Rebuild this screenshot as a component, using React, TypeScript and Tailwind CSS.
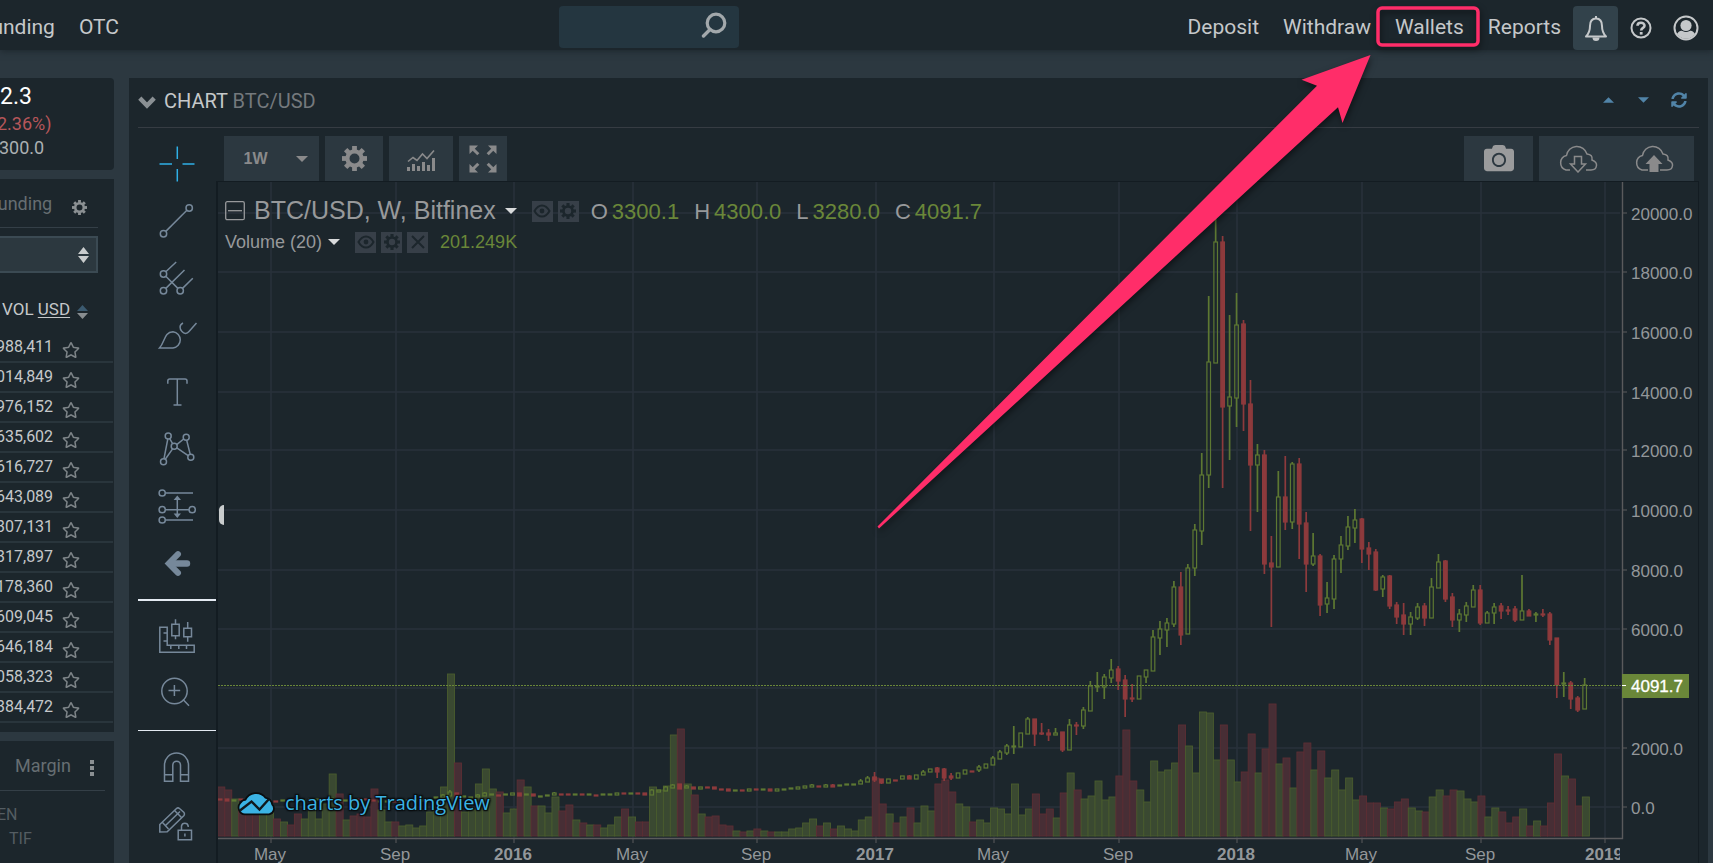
import type { ReactNode } from "react";
import { FaCamera, FaRegStar, FaSyncAlt } from "react-icons/fa";

// Weekly volume, bar height in px. Negative means the week closed lower.
const VOLUMES = [
  -49, -46, 37, -29, -24, -24, 27, 27, -17, 14, -11, -22, 17, 26, 17, 32, 62, -42, 16, -20,
  -22, -19, -47, 26, 14, -14, 10, 11, 8, 10, 24, 26, 49, 162, -73, 24, 26, 52, 67, 47,
  -44, 23, 27, -56, 49, -30, 30, 23, 39, -25, -31, 16, -13, 11, -11, 8, 11, 19, -27, 19,
  -14, -14, 49, 46, 50, 101, -107, 52, -41, 22, -19, -20, -11, -10, 5, -4, 5, -7, 5, -4,
  4, 4, 7, 8, 13, 17, -10, 13, -7, 10, 7, 5, 16, 19, -58, -32, 22, -13, 19, -28,
  13, 30, 25, -52, -56, -44, 32, 29, -14, 16, 13, 28, 27, 22, 52, 21, 27, -42, -22, -27,
  18, -43, 63, -46, 37, 40, 55, 36, 39, -60, -106, -55, 46, 34, 75, 64, 66, 73, -111, 90,
  63, 124, 123, 76, -111, 76, 54, -64, -102, 63, -87, -132, 72, -78, 48, -84, -93, 66, -85, 58,
  66, 46, 58, 36, -40, -33, -33, 28, -27, -34, -37, 28, 25, -24, 39, 46, -40, -46, 45, 37,
  34, -40, 19, 28, -24, -13, -19, 27, -10, 15, -10, -33, -82, 60, -57, -30, 39,
];

// high, body top, body bottom, low. Missing values collapse to a flat candle.
const CANDLES: number[][] = [
  [799], [799, 799, 801], [800], [799], [800], [801], [801], [801], [801], [800],
  [800], [799], [800], [799], [799], [799], [798], [799], [800], [799],
  [799], [799], [800], [801], [801], [801], [801], [800], [800], [800],
  [799], [797], [794, 795, 798], [790, 792, 796, 799], [793, 793, 797], [796], [797], [794, 795, 797], [792, 793, 796], [794],
  [795], [794], [793, 793, 795], [793, 793, 796], [794], [794, 794, 796], [796], [795], [792, 793, 795], [794],
  [794], [794], [794], [794], [795], [794], [794], [793, 793, 795], [793], [793],
  [793], [793, 793, 795], [789, 790, 795], [790, 790, 792], [786, 787, 791], [784, 785, 788], [784, 784, 789], [785, 786, 788], [787, 787, 789], [787, 787, 789],
  [787], [787, 787, 789], [789], [789, 789, 791], [790], [790], [789, 789, 791], [789], [789], [789, 789, 791],
  [789, 789, 791], [789], [788], [787, 787, 789], [786, 786, 788], [784, 785, 787], [786], [784, 785, 787], [784, 785, 787], [785],
  [784], [784], [779, 781, 784], [776, 778, 782], [772, 777, 780, 782], [779, 779, 783, 784], [779, 779, 783], [780], [776, 776, 779], [775, 776, 779],
  [775, 775, 779], [770, 772, 775], [769, 769, 772], [767, 768, 772, 778], [768, 769, 778, 781], [773, 776, 778, 780], [773, 773, 778], [770, 770, 774], [771], [765, 767, 770, 772],
  [764, 764, 768], [756, 758, 765], [750, 752, 759], [744, 746, 753, 755], [726, 746, 747, 754], [733, 733, 747], [717, 719, 734], [719, 719, 734, 746], [723, 733, 734, 735], [729, 733, 735, 741],
  [728, 733, 735], [732, 732, 750, 752], [719, 725, 750], [722, 725, 726, 735], [707, 710, 726, 729], [681, 686, 711], [672, 686, 687, 692], [674, 677, 687, 699], [659, 670, 678, 683], [666, 669, 681, 690],
  [675, 680, 699, 717], [684, 698, 699, 702], [676, 676, 699], [670, 670, 677, 683], [630, 637, 671], [621, 629, 638, 655], [618, 623, 630, 647], [581, 587, 624, 627], [572, 587, 635, 645], [564, 568, 634],
  [524, 530, 568, 576], [453, 475, 531, 545], [296, 362, 475, 488], [212, 242, 363], [236, 242, 407, 488], [315, 397, 406, 460], [293, 325, 398, 427], [320, 324, 404, 431], [380, 404, 465, 531], [444, 455, 465, 512],
  [450, 455, 564, 574], [536, 563, 567, 627], [471, 497, 567], [456, 497, 522, 530], [462, 464, 522, 529], [458, 464, 524, 559], [512, 523, 564, 592], [533, 556, 564, 566], [554, 556, 605, 616], [582, 598, 604, 613],
  [555, 559, 599, 609], [536, 545, 559, 573], [516, 527, 546, 550], [509, 520, 528, 543], [518, 519, 549, 563], [542, 548, 554, 570], [549, 552, 590, 591], [575, 577, 589, 597], [575, 576, 606, 609], [602, 605, 617, 624],
  [603, 615, 624, 635], [612, 617, 624, 635], [603, 607, 618, 620], [603, 606, 618, 626], [578, 587, 618], [554, 562, 588], [560, 561, 599, 602], [593, 597, 620, 627], [609, 614, 620, 632], [602, 606, 615, 622],
  [585, 590, 607], [585, 590, 623, 625], [611, 613, 623], [603, 607, 613, 624], [603, 606, 611, 619], [606, 610, 611, 615], [606, 609, 620, 622], [575, 611, 620], [609, 611, 616], [612, 614, 615, 622],
  [609, 614, 615, 617], [612, 614, 640, 645], [638, 638, 685, 698], [672, 683, 684, 697], [681, 683, 699, 709], [696, 698, 710, 712], [678, 685, 709],
];

const PRICES = [
  { label: "20000.0", y: 213 },
  { label: "18000.0", y: 272 },
  { label: "16000.0", y: 332 },
  { label: "14000.0", y: 392 },
  { label: "12000.0", y: 450 },
  { label: "10000.0", y: 510 },
  { label: "8000.0", y: 570 },
  { label: "6000.0", y: 629 },
  { label: "", y: 688 },
  { label: "2000.0", y: 748 },
  { label: "0.0", y: 807 },
];

const DATES = [
  { label: "May", x: 271 },
  { label: "Sep", x: 396 },
  { label: "2016", x: 514 },
  { label: "May", x: 633 },
  { label: "Sep", x: 757 },
  { label: "2017", x: 876 },
  { label: "May", x: 994 },
  { label: "Sep", x: 1119 },
  { label: "2018", x: 1237 },
  { label: "May", x: 1362 },
  { label: "Sep", x: 1481 },
  { label: "2019", x: 1605 },
];

const TICKERS = [
  "988,411",
  "014,849",
  "976,152",
  "635,602",
  "616,727",
  "643,089",
  "307,131",
  "317,897",
  "178,360",
  "609,045",
  "646,184",
  "058,323",
  "384,472",
];

function Gear({ className }: { className: string }) {
  return (
    <svg viewBox="0 0 24 24" className={className} fill="none" stroke="currentColor">
      <circle cx="12" cy="12" r="6.8" strokeWidth="4" />
      {[0, 45, 90, 135, 180, 225, 270, 315].map((a) => (
        <path key={a} d="M12 4.5V0" strokeWidth="4.6" transform={`rotate(${a} 12 12)`} />
      ))}
    </svg>
  );
}

function Caret({ className }: { className: string }) {
  return (
    <svg viewBox="0 0 12 6" className={className} fill="currentColor">
      <path d="M0 0h12L6 6z" />
    </svg>
  );
}

function Eye() {
  return (
    <svg viewBox="0 0 18 18" className="w-[18px] h-[18px]" fill="none" stroke="currentColor">
      <path d="M1.5 9C4 4.500 6.500 3.500 9 3.500S14 4.500 16.500 9C14 13.500 11.500 14.500 9 14.500S4 13.500 1.500 9z" strokeWidth="2" />
      <circle cx="9" cy="9" r="2.4" fill="currentColor" stroke="none" />
    </svg>
  );
}

function LegendButton({ label, children }: { label: string; children: ReactNode }) {
  return (
    <button
      aria-label={label}
      className="w-[21px] h-[21px] bg-[#373f48] text-[#1c262c] flex items-center justify-center"
    >
      {children}
    </button>
  );
}

function Tool({ label, children, active }: { label: string; children: ReactNode; active?: boolean }) {
  return (
    <button
      aria-label={label}
      className={`h-[57px] pb-[2px] w-full flex items-center justify-center ${active ? "text-[#2fb0e6]" : "text-[#76889a]"}`}
    >
      <svg viewBox="0 0 36 36" className="w-9 h-9 overflow-visible" fill="none" stroke="currentColor" strokeWidth="1.5">
        {children}
      </svg>
    </button>
  );
}

function DrawingTools() {
  return (
    <div className="w-[87px] pl-[9px] shrink-0">
      <Tool label="Cross" active>
        <path d="M.5 18H13M23.500 18H35.500M18.300 .5V13M18.300 23V35.500" />
      </Tool>
      <Tool label="Trend line">
        <circle cx="30.2" cy="5" r="3.2" />
        <circle cx="4.5" cy="30.7" r="3.2" />
        <path d="M27.900 7.300 6.800 28.400" />
      </Tool>
      <Tool label="Pitchfork">
        <circle cx="4.5" cy="14" r="3.2" />
        <circle cx="4.5" cy="30.7" r="3.2" />
        <circle cx="21.2" cy="30.7" r="3.2" />
        <path d="M6.800 11.700 17.200 2M6.800 28.400 25.500 10M23.500 28.400 33.800 18.300M6.800 16.300 18.900 28.400" />
      </Tool>
      <Tool label="Brush">
        <path d="M.5 31C6 25 5 15 14 14.700A8.200 8.200 0 0 1 14 31z" />
        <path d="M24 6C20 8 20.500 12 23 14.500C25 17 28 17 30 14.500L37.500 6" />
      </Tool>
      <Tool label="Text">
        <path d="M8.800 9.700V7Q8.800 5 10.800 5H26Q28 5 28 7V9.700M18.300 5V31M14.500 31H22.500" />
      </Tool>
      <Tool label="Patterns">
        <circle cx="9.200" cy="5" r="3" />
        <circle cx="27.200" cy="6.300" r="3" />
        <circle cx="15.200" cy="15.300" r="3" />
        <circle cx="31.800" cy="26.300" r="3" />
        <circle cx="4.500" cy="30.700" r="3" />
        <path d="M5 27.700 8.800 8M10.700 7.600 13.600 12.700M17.700 13.700 24.700 8M27.700 9.300 31.200 23.300M29.200 24.700 17.800 16.900M13.600 17.900 6.300 28.300" />
      </Tool>
      <Tool label="Prediction">
        <circle cx="3.200" cy="5" r="3.100" />
        <circle cx="3.200" cy="21.700" r="3.100" />
        <circle cx="33.200" cy="21.700" r="3.100" />
        <circle cx="3.200" cy="32" r="3.100" />
        <path d="M6.300 5H34M6.300 21.700H30M6.300 32H34M18.300 9V28" />
        <path d="M18.300 7.500 22 12H14.600zM18.300 30 22 25.500H14.600z" fill="currentColor" stroke="none" />
      </Tool>
      <Tool label="Hide tools">
        <path d="M19 9.200 9.800 18.500 19 27.800" strokeWidth="6" strokeLinecap="round" />
        <path d="M11 18.500H28" strokeWidth="6.400" strokeLinecap="round" />
      </Tool>
      <div className="h-[2px] bg-[#e4eaf2] my-[7px]" />
      <Tool label="Measure">
        <path d="M.8 9.300H8.200V27.300H35.200V34.300H.8zM4.500 15H8.200M4.500 23H8.200M11.800 27.300V31M19.800 27.300V31M27.500 27.300V31" />
        <path d="M12.800 6.300H20.200V17.700H12.800zM16.500 1.300V6.300M16.500 17.700V21.300M24.800 10.300H32.500V18.700H24.800zM28.700 4V10.300M28.700 18.700V23.700" />
      </Tool>
      <Tool label="Zoom in">
        <circle cx="15.500" cy="16" r="12.700" />
        <path d="M9.500 15.500H21.200M15.400 10V21M24 24.500 30 30.700" />
      </Tool>
      <div className="h-px bg-[#e4eaf2] my-[8px]" />
      <Tool label="Magnet">
        <path d="M5.500 32.300V16A12 12 0 0 1 29.500 16V32.300H21.500V16A3.850 3.850 0 0 0 13.800 16V32.300zM5.500 25.700H13.800M21.500 25.700H29.500" />
      </Tool>
      <Tool label="Lock drawings">
        <path d="M.8 26V18.500L17.500 2.500Q19 1.200 20.500 2.500L25 6.500Q26 8 25 9.500L8.200 25.700zM3.500 16.500 9.500 23M6.500 19.500 21 5.500M15.500 4.500 22.500 11.500" />
        <path d="M19.200 24.300H32.500V33.700H19.200zM22.500 24.300V20A3.400 3.400 0 0 1 29.200 20V21M25.900 27.500V30.500" />
      </Tool>
    </div>
  );
}

function PriceChart() {
  return (
    <svg viewBox="218 182 1480 681" className="w-[1480px] h-[681px] shrink-0 font-['Liberation_Sans',sans-serif] text-[17px]">
      <defs>
        <clipPath id="dates">
          <rect x="218" y="838" width="1402" height="30" />
        </clipPath>
      </defs>

      <g stroke="#28323b" strokeWidth="1.500">
        {PRICES.map((p) => (
          <path key={p.y} d={`M218 ${p.y}H1620`} />
        ))}
        {DATES.map((d) => (
          <path key={d.x} d={`M${d.x} 182V838`} />
        ))}
      </g>

      {VOLUMES.map((v, i) => (
        <rect
          key={i}
          x={217.800 + i * 6.962}
          y={836 - Math.abs(v)}
          width="7"
          height={Math.abs(v)}
          fill={v > 0 ? "#3a4931" : "#472e35"}
          stroke={v > 0 ? "#4a5c2e" : "#5c2e34"}
          strokeWidth=".9"
        />
      ))}

      {CANDLES.map(([high, top = high, bottom = top + 1, low = bottom], i) => {
        const x = 220.100 + i * 6.962;
        const up = VOLUMES[i] > 0;
        return (
          <g key={i} stroke={up ? "#5d7832" : "#8d3a3c"} fill={up ? "none" : "#8d3a3c"}>
            <path d={`M${x} ${high}V${top}M${x} ${bottom}V${low}`} strokeWidth="1.700" />
            <rect x={x - 1.8} y={top} width="3.600" height={bottom - top} strokeWidth="1.200" />
          </g>
        );
      })}

      <path d="M218 685.500H1622" stroke="#6a8739" strokeDasharray="2 1" />
      <path d="M1622.500 182V838.500H218" fill="none" stroke="#5a5a5c" strokeWidth="1.400" />

      <g fill="#93979a">
        {PRICES.map(
          (p) =>
            p.label && (
              <g key={p.y}>
                <path d={`M1622 ${p.y}h5`} stroke="#5a5a5c" />
                <text x="1631" y={p.y + 7}>
                  {p.label}
                </text>
              </g>
            ),
        )}
        <g clipPath="url(#dates)">
          {DATES.map((d) => (
            <g key={d.x}>
              <path d={`M${d.x} 838v5`} stroke="#5a5a5c" />
              <text x={d.x - 1} y="860" textAnchor="middle" fontWeight={d.label.startsWith("20") ? 700 : 400}>
                {d.label}
              </text>
            </g>
          ))}
        </g>
      </g>

      <rect x="1622" y="674" width="67" height="24" fill="#6a8739" />
      <path d="M1622 685.500h4" stroke="#fff" />
      <text x="1631" y="692" fill="#fff" stroke="#fff" strokeWidth=".3">
        4091.7
      </text>
    </svg>
  );
}

function Ohlc({ name, value }: { name: string; value: string }) {
  return (
    <span className="mr-[15px]">
      {name}
      <span className="text-[#6a8739] ml-1">{value}</span>
    </span>
  );
}

function Legend() {
  return (
    <div className="absolute left-[7px] top-[12px] font-['Liberation_Sans',sans-serif] text-[#97999b]">
      <div className="flex items-center h-[34px]">
        <svg viewBox="0 0 20 20" className="w-5 h-5" fill="none" stroke="currentColor" strokeWidth="1.300">
          <rect x=".7" y=".7" width="18.600" height="18" rx="1.500" />
          <path d="M3 9.700H17" />
        </svg>
        <h2 className="text-[25px] ml-[9px] whitespace-nowrap">BTC/USD, W, Bitfinex</h2>
        <Caret className="w-3 h-[6px] ml-[9px] text-[#d8dadb]" />
        <div className="flex gap-[5px] ml-[15px] mr-3">
          <LegendButton label="Hide series">
            <Eye />
          </LegendButton>
          <LegendButton label="Series settings">
            <Gear className="w-4 h-4" />
          </LegendButton>
        </div>
        <div className="text-[22px] flex whitespace-nowrap">
          <Ohlc name="O" value="3300.1" />
          <Ohlc name="H" value="4300.0" />
          <Ohlc name="L" value="3280.0" />
          <Ohlc name="C" value="4091.7" />
        </div>
      </div>
      <div className="flex items-center h-[28px] text-[18px]">
        <span className="whitespace-nowrap">Volume (20)</span>
        <Caret className="w-3 h-[6px] ml-[6px] text-[#d8dadb]" />
        <div className="flex gap-[5px] ml-[15px] mr-3">
          <LegendButton label="Hide volume">
            <Eye />
          </LegendButton>
          <LegendButton label="Volume settings">
            <Gear className="w-4 h-4" />
          </LegendButton>
          <LegendButton label="Remove volume">
            <svg viewBox="0 0 16 16" className="w-4 h-4" stroke="currentColor" strokeWidth="2">
              <path d="M2 2 14 14M14 2 2 14" />
            </svg>
          </LegendButton>
        </div>
        <span className="text-[#6a8739]">201.249K</span>
      </div>
    </div>
  );
}

function Watermark() {
  return (
    <a
      href="#tradingview"
      className="absolute left-[20px] top-[607px] flex items-center gap-[11px] h-[28px] text-[#3bb3e4] text-[20px] font-medium font-['Open_Sans',sans-serif] [text-shadow:0_0_2px_#0a0d0f,1px_1px_1px_#0a0d0f,-1px_-1px_1px_#0a0d0f,1px_-1px_1px_#0a0d0f,-1px_1px_1px_#0a0d0f,0_0_3px_#0a0d0f]"
    >
      <svg viewBox="0 0 36 24" className="w-9 h-6 overflow-visible">
        <path
          d="M7 22.500A6 6 0 0 1 3 12.500A6 6 0 0 1 8 9.500A11 11 0 0 1 27 7.500A8 8 0 0 1 33.500 14A5 5 0 0 1 31 22.500z"
          fill="#3bb3e4"
          stroke="#0a0d0f"
          strokeWidth="3.500"
          paintOrder="stroke"
        />
        <path d="M2 19.500 13.500 10.500 21.500 18.500 31 8" fill="none" stroke="#10181d" strokeWidth="2.400" />
      </svg>
      <span className="whitespace-nowrap">charts by TradingView</span>
    </a>
  );
}

function ChartToolbar() {
  const btn = "h-[45px] bg-[#2c3840] text-[#8a8a8b] flex items-center justify-center";
  return (
    <div className="flex h-[45px] pl-2 pr-[5px] gap-[6px]">
      <button className={`${btn} w-[95px] gap-7 pl-2 font-['Liberation_Sans',sans-serif] font-bold text-[16px]`}>
        1W
        <Caret className="w-3 h-[6px]" />
      </button>
      <button aria-label="Chart settings" className={`${btn} w-[58px]`}>
        <Gear className="w-[25px] h-[25px]" />
      </button>
      <button aria-label="Indicators" className={`${btn} w-[64px]`}>
        <svg viewBox="0 0 28 24" className="w-7 h-6 mt-1" fill="currentColor">
          <path d="M0 18h3v4H0zM5 15h3v7H5zM10 17h3v5h-3zM15 13h3v9h-3zM20 16h3v6h-3zM25 9h3v13h-3z" />
          <path d="M1 12.500 6 8.500 10 11.500 15.500 5 20 9.500 27 1.500" fill="none" stroke="currentColor" strokeWidth="1.600" />
        </svg>
      </button>
      <button aria-label="Full screen" className={`${btn} w-[48px]`}>
        <svg viewBox="0 0 28 28" className="w-7 h-7" fill="currentColor" stroke="currentColor">
          {[0, 90, 180, 270].map((a) => (
            <g key={a} transform={`rotate(${a} 14 14)`}>
              <path d="M.5 .5H9L.5 9z" stroke="none" />
              <path d="M3 3 9.300 9.300" strokeWidth="3" />
            </g>
          ))}
        </svg>
      </button>
      <button aria-label="Snapshot" className={`${btn} w-[69px] ml-auto`}>
        <FaCamera className="w-[30px] h-[30px] mb-[2px] text-[#9a9b9c]" />
      </button>
      <div className="flex bg-[#2c3840]">
        <button aria-label="Load chart" className={`${btn} w-[78px]`}>
          <svg viewBox="0 0 40 28" className="w-10 h-7" fill="none" stroke="currentColor" strokeWidth="1.500">
            <path d="M12 25H8A7.500 7.500 0 0 1 8.500 10.500A10.500 10.500 0 0 1 29 9Q35 9.500 34 15Q39 17 38.500 20.500Q38 25 33 25H28" />
            <path d="M16.500 11.500H23.500V19H27.500L20 27 12.500 19H16.500z" />
          </svg>
        </button>
        <button aria-label="Save chart" className={`${btn} w-[77px] pr-1`}>
          <svg viewBox="0 0 40 28" className="w-10 h-7" fill="none" stroke="currentColor" strokeWidth="1.500">
            <path d="M14 25H8A7.500 7.500 0 0 1 8.500 10.500A10.500 10.500 0 0 1 29 9Q35 9.500 34 15Q39 17 38.500 20.500Q38 25 33 25H26" />
            <path d="M15.500 27V19H11.500L20 10 28.500 19H24.500V27z" fill="currentColor" stroke="none" />
          </svg>
        </button>
      </div>
    </div>
  );
}

function Header() {
  return (
    <header className="h-[50px] shrink-0 bg-[#1c262c] flex pt-[6px] relative shadow-[0_1px_7px_#1c262c] text-[21px] text-[#c5c8ca]">
      <nav className="flex items-center gap-6 -ml-5 mr-2 w-1/3 shrink-0">
        <a href="#funding">Funding</a>
        <a href="#otc">OTC</a>
      </nav>
      <div className="relative w-[180px] h-[42px] shrink-0">
        <input aria-label="Search" className="w-full h-full rounded bg-[#243640] pl-3 pr-10 outline-none" />
        <svg viewBox="0 0 26 26" className="absolute right-3 top-[6px] w-[26px] h-[26px]" fill="none" stroke="#a2a8ab">
          <circle cx="15" cy="11" r="8.800" strokeWidth="3.200" />
          <path d="M9 17.500 2.500 24" strokeWidth="3.400" strokeLinecap="round" />
        </svg>
      </div>
      <nav className="flex items-center justify-end flex-1 pr-[14px] whitespace-nowrap">
        <a href="#deposit" className="mr-6">Deposit</a>
        <a href="#withdraw" className="mr-6">Withdraw</a>
        <a href="#wallets" className="mr-6">Wallets</a>
        <a href="#reports">Reports</a>
        <button aria-label="Notifications" className="w-[45px] h-11 ml-3 rounded bg-[#32424b] flex items-center justify-center">
          <svg viewBox="0 0 24 26" className="w-6 h-[26px]" fill="none" stroke="currentColor" strokeWidth="2">
            <path d="M12 3.500C7.500 3.500 6 7 6 11C6 16.500 5 18.500 2 21.500H22C19 18.500 18 16.500 18 11C18 7 16.500 3.500 12 3.500z" strokeLinejoin="round" />
            <path d="M12 1V4" />
            <path d="M8.500 22.500a3.500 3.500 0 0 0 7 0z" fill="currentColor" stroke="none" />
          </svg>
        </button>
        <button aria-label="Help" className="ml-3">
          <svg viewBox="0 0 22 22" className="w-[22px] h-[22px]" fill="none" stroke="currentColor">
            <circle cx="11" cy="11" r="9.500" strokeWidth="2" />
            <path d="M7.500 8.800C7.500 4.800 14.500 4.800 14.500 8.700C14.500 11 11.200 10.800 11.200 13.500" strokeWidth="2.600" />
            <path d="M9.800 15h2.800v2.600H9.800z" fill="currentColor" stroke="none" />
          </svg>
        </button>
        <button aria-label="Account" className="ml-[21px]">
          <svg viewBox="0 0 26 26" className="w-[26px] h-[26px]" fill="currentColor">
            <circle cx="13" cy="13" r="11.500" fill="none" stroke="currentColor" strokeWidth="2" />
            <circle cx="13" cy="10.500" r="5.600" />
            <path d="M4 19C6 15.500 8 15.500 9.500 16Q13 18 16.500 16C18 15.500 20 15.500 22 19A11 11 0 0 1 4 19z" />
          </svg>
        </button>
      </nav>
    </header>
  );
}

function Sidebar() {
  return (
    <aside className="w-[114px] shrink-0 flex flex-col gap-[9px] text-[18px]">
      <section className="bg-[#1c262c] h-[92px] shrink-0 rounded-r pt-[3px]">
        <p className="text-[23px] leading-[31px] text-white">2.3</p>
        <p className="leading-[24px] text-[#b6565a] -ml-[3px]">2.36%)</p>
        <p className="leading-[24px] text-[#abb0b2] -ml-[1px]">300.0</p>
      </section>

      <section className="bg-[#1c262c] h-[553px] shrink-0">
        <div className="h-[49px] mr-4 border-b border-[#343f47] flex items-center justify-between text-[#666e72] pr-[11px]">
          <a href="#funding" className="-ml-3">Funding</a>
          <button aria-label="Ticker settings">
            <Gear className="w-[15px] h-[15px] text-[#8b9093] mt-2" />
          </button>
        </div>
        <div className="relative mt-2 mr-4">
          <select
            aria-label="Market"
            className="block w-full h-[37px] appearance-none bg-[#2c383f] border-2 border-l-0 border-[#3b4a53] outline-none"
          />
          <svg viewBox="0 0 11 16" className="absolute right-[9px] top-[11px] w-[11px] h-4" fill="#c9cccd">
            <path d="M0 7 5.500 0 11 7zM0 9 5.500 16 11 9z" />
          </svg>
        </div>
        <table className="w-[113px] table-fixed mt-[15px] text-[16px] text-[#c5c8ca]">
          <thead>
            <tr className="h-[44px] text-[17px]">
              <th className="w-[73px] font-normal text-left p-0 pl-[2px] whitespace-nowrap">
                VOL <span className="underline underline-offset-2">USD</span>
              </th>
              <th className="p-0 align-middle">
                <svg viewBox="0 0 11 14" className="w-[11px] h-[14px] ml-1 mt-1" aria-hidden="true">
                  <path d="M0 6 5.500 0 11 6z" fill="#3b5a70" />
                  <path d="M0 8 5.500 14 11 8z" fill="#888d90" />
                </svg>
              </th>
            </tr>
          </thead>
          <tbody>
            {TICKERS.map((t) => (
              <tr key={t} className="h-[30px] border-b-2 border-[#29353c]">
                <td className="p-0">
                  <span className="-ml-1">{t}</span>
                </td>
                <td className="p-0">
                  <button aria-label={`Favorite ${t}`} className="block mt-[6px] -ml-[11px] text-[#7d8488]">
                    <FaRegStar className="w-[18px] h-4" />
                  </button>
                </td>
              </tr>
            ))}
          </tbody>
        </table>
      </section>

      <section className="bg-[#1c262c] h-[200px] shrink-0 text-[#666e72]">
        <div className="h-[50px] mr-[9px] border-b border-[#343f47] flex items-center justify-between pl-[15px] pr-[11px]">
          <a href="#margin">Margin</a>
          <button aria-label="More" className="flex flex-col gap-[2px] mt-1">
            <i className="w-[4px] h-[4px] bg-[#8b9093]" />
            <i className="w-[4px] h-[4px] bg-[#8b9093]" />
            <i className="w-[4px] h-[4px] bg-[#8b9093]" />
          </button>
        </div>
        <div className="pt-[12px] text-[16px] leading-6 text-[#545d62]">
          <p className="-ml-[3px]">EN</p>
          <p className="ml-[9px]">TIF</p>
        </div>
      </section>
    </aside>
  );
}

// Call-out that walks the reader to the Wallets link
function Callout() {
  return (
    <div className="absolute right-0 top-0 pointer-events-none">
      <svg viewBox="863 0 850 540" className="w-[850px] h-[540px] [filter:drop-shadow(1px_3px_3px_rgba(0,0,0,0.5))]">
        <rect x="1378" y="8" width="100" height="37" rx="4" fill="none" stroke="#ff2d69" strokeWidth="3.500" />
        <path d="M1370.500 55 1301.500 79.700 1317 85.700 877.500 526.500 879 528.500 1338 107.300 1342.500 123z" fill="#ff2d69" />
      </svg>
    </div>
  );
}

export default function App() {
  return (
    <div className="relative h-screen w-full overflow-hidden flex flex-col bg-[#2c3840] font-[Roboto,sans-serif]">
      <Header />
      <main className="flex flex-1 min-h-0 pt-7 pr-[5px] gap-[15px]">
        <Sidebar />
        <section className="flex-1 min-w-0 bg-[#1c262c] overflow-hidden">
          <div className="ml-[9px] mr-[9px] h-[50px] pb-1 border-b border-[#363c43] flex items-center text-[20px]">
            <svg viewBox="0 0 18 13" className="w-[18px] h-[13px] mt-1 mr-2" fill="none" stroke="#8a9094" strokeWidth="4.500">
              <path d="M1.800 2.200 9 9.500 16.200 2.200" />
            </svg>
            <h1 className="text-[#c5c8ca]">
              CHART <span className="text-[#74797d]">BTC/USD</span>
            </h1>
            <div className="ml-auto flex items-center text-[#5184a8] pr-3 pb-[2px]">
              <button aria-label="Move up">
                <Caret className="w-[11px] h-[6px] rotate-180" />
              </button>
              <button aria-label="Move down" className="ml-6">
                <Caret className="w-[11px] h-[6px]" />
              </button>
              <button aria-label="Refresh" className="ml-[22px]">
                <FaSyncAlt className="w-4 h-4" />
              </button>
            </div>
          </div>
          <div className="flex pt-2 pr-[9px]">
            <DrawingTools />
            <div className="flex-1 min-w-0">
              <ChartToolbar />
              <div className="relative border-l-2 border-t border-r border-[#131c22] flex justify-end overflow-hidden">
                <PriceChart />
                <Legend />
                <Watermark />
                <button
                  aria-label="Toggle drawing tools"
                  className="absolute left-px top-[323px] w-[5px] h-5 rounded-l-full bg-[#c9cccd]"
                />
              </div>
            </div>
          </div>
        </section>
      </main>
      <Callout />
    </div>
  );
}
